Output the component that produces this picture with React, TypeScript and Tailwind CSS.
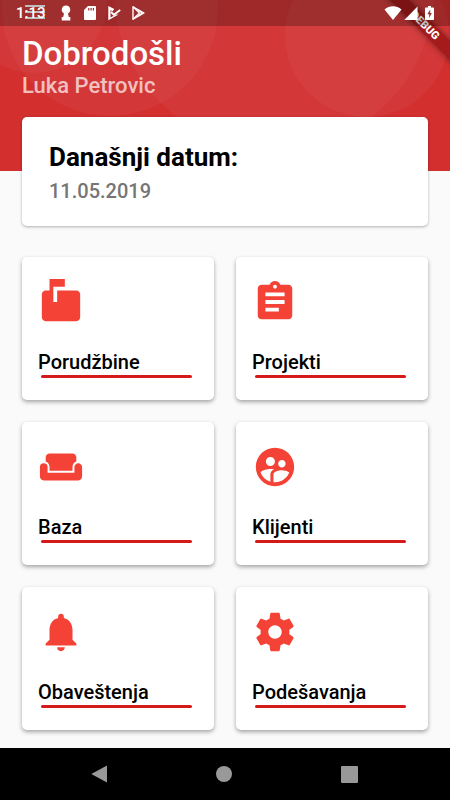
import React from 'react';
import type { IconType } from 'react-icons';
import {
  MdAssignment,
  MdMarkunreadMailbox,
  MdNotifications,
  MdSupervisedUserCircle,
  MdWeekend,
} from 'react-icons/md';

type CardIcon = IconType | ((props: { className?: string }) => React.ReactElement);

function CogIcon({ className }: { className?: string }) {
  return (
    <svg className={className} viewBox="0 0 24 24" fill="currentColor">
      <path d="M19.43 12.98c.04-.32.07-.64.07-.98s-.03-.66-.07-.98l2.11-1.65c.19-.15.24-.42.12-.64l-2-3.460c-.12-.22-.39-.3-.61-.22l-2.490 1c-.52-.4-1.080-.73-1.690-.98l-.38-2.650C14.460 2.180 14.250 2 14 2h-4c-.25 0-.46.18-.49.42l-.38 2.650c-.61.25-1.170.59-1.690.98l-2.490-1c-.23-.09-.49 0-.61.22l-2 3.460c-.13.22-.07.49.12.64l2.110 1.650c-.04.32-.07.65-.07.98s.03.66.07.98l-2.110 1.650c-.19.15-.24.42-.12.64l2 3.460c.12.22.39.3.61.22l2.490-1c.52.4 1.080.73 1.690.98l.38 2.650c.03.24.24.42.49.42h4c.25 0 .46-.18.49-.42l.38-2.650c.61-.25 1.170-.59 1.690-.98l2.490 1c.23.09.49 0 .61-.22l2-3.460c.12-.22.07-.49-.12-.64l-2.110-1.650zM12 15.500c-1.930 0-3.500-1.570-3.500-3.500s1.570-3.500 3.500-3.500 3.500 1.570 3.500 3.500-1.570 3.500-3.500 3.500z" />
    </svg>
  );
}

const items: { label: string; icon: CardIcon }[] = [
  { label: 'Porudžbine', icon: MdMarkunreadMailbox },
  { label: 'Projekti', icon: MdAssignment },
  { label: 'Baza', icon: MdWeekend },
  { label: 'Klijenti', icon: MdSupervisedUserCircle },
  { label: 'Obaveštenja', icon: MdNotifications },
  { label: 'Podešavanja', icon: CogIcon },
];

function StatusBar() {
  return (
    <div className="absolute inset-x-0 top-0 z-20 flex h-[26px] items-center justify-between bg-black/25 px-4 text-white">
      <div className="flex items-center">
        <span className="w-[45px] text-[15px] leading-5 font-medium">1:13</span>
        <svg className="h-4 w-[10px]" viewBox="0 0 10 16" fill="currentColor">
          <path d="M5 0.500a4.200 4.200 0 0 1 2 7.900L7.800 12H9.300v3.500H.7V12h1.500L3 8.400A4.200 4.200 0 0 1 5 .5z" />
        </svg>
        <svg className="ml-[13px] h-4 w-3" viewBox="0 0 12 16" fill="currentColor">
          <path fillRule="evenodd" d="M4 1h7a1 1 0 0 1 1 1v12a1 1 0 0 1-1 1H1a1 1 0 0 1-1-1V5zM4.200 3v2.600h1.200V3zM6.500 3v2.600h1.200V3zM8.800 3v2.600H10V3z" />
        </svg>
        <svg className="ml-3 h-4 w-[13px]" viewBox="0 0 13 16">
          <path fill="currentColor" d="M0.300 1l6 3-1.800 2.500L2.500 5v7.500L8 9.500h2.500L.3 15.200z" />
          <path fill="none" stroke="currentColor" strokeWidth="2" d="M3 7L5.800 9.700 12.200 5" />
        </svg>
        <svg className="ml-[11px] h-4 w-[13px]" viewBox="0 0 13 16" fill="none" stroke="currentColor" strokeLinejoin="round">
          <path strokeWidth="1.400" d="M1 1.800v12.400L12 8z" />
          <path strokeWidth="1.400" d="M1 1.800L7.500 8 1 14.200M6.500 5l3.500 3-3.500 3" />
        </svg>
      </div>
      <div className="flex items-center">
        <svg className="h-4 w-[18px]" viewBox="0 0 18 16" fill="currentColor">
          <path d="M9 15L.5 4.400C3 2.300 6 1.200 9 1.200s6 1.100 8.500 3.200z" />
        </svg>
        <svg className="ml-[2px] h-4 w-[14px]" viewBox="0 0 14 16" fill="currentColor">
          <path d="M0.300 15H13.500V1.500z" />
        </svg>
        <svg className="ml-[7px] h-4 w-[9px]" viewBox="0 0 9 16" fill="currentColor">
          <path fillRule="evenodd" d="M3 1h3v1.500h2.200a.8.8 0 0 1 .8.800v11a.8.8 0 0 1-.8.800H.8a.8.8 0 0 1-.8-.8v-11a.8.8 0 0 1 .8-.8H3zM5.200 4.500L2.400 9.300h1.800v3.700l2.600-5H5.200z" />
        </svg>
      </div>
    </div>
  );
}

function DebugBanner() {
  return (
    <div className="pointer-events-none absolute right-0 top-0 z-10 h-20 w-20 overflow-hidden">
      <div className="absolute -right-[35px] top-[19px] w-[120px] rotate-45 bg-[#a51a1a] text-center text-[11px] leading-[13px] font-black text-white shadow-[0_0_6px_rgba(0,0,0,0.5)]">
        DEBUG
      </div>
    </div>
  );
}

function HeaderBackground() {
  return (
    <div className="absolute inset-x-0 top-0 h-[171px] overflow-hidden bg-[#d32f2f]">
      <svg className="h-full w-full" viewBox="0 0 450 171" preserveAspectRatio="xMidYMin slice" fill="#fff" fillOpacity="0.04">
        <circle cx="34" cy="0" r="73" />
        <circle cx="110" cy="8" r="108" />
        <circle cx="274" cy="-10" r="160" />
        <circle cx="367" cy="35" r="82" />
      </svg>
    </div>
  );
}

function MenuCard({ label, icon: Icon }: { label: string; icon: CardIcon }) {
  return (
    <button
      type="button"
      className="flex flex-col rounded-[5px] bg-white pt-[22px] pr-[22px] pb-[22px] pl-4 text-left shadow-[0_2px_4px_rgba(0,0,0,0.35)]"
    >
      <Icon className="h-[46px] w-[46px] text-[#f44336]" />
      <span className="mt-[25px] text-[20px] leading-6 font-medium text-black">{label}</span>
      <span className="mt-px ml-[3px] h-[3px] self-stretch rounded-full bg-[#d51a1a]" />
    </button>
  );
}

function NavigationBar() {
  return (
    <nav className="mt-auto grid h-[52px] grid-cols-3 items-center bg-black pr-[38px] pl-9 text-[#999]">
      <button type="button" aria-label="Back" className="flex justify-center">
        <svg className="h-[18px] w-4" viewBox="0 0 16 18" fill="currentColor"><path d="M16 0.500v17L0.300 9z" /></svg>
      </button>
      <button type="button" aria-label="Home" className="flex justify-center">
        <svg className="h-4 w-4" viewBox="0 0 16 16" fill="currentColor"><circle cx="8" cy="8" r="8" /></svg>
      </button>
      <button type="button" aria-label="Overview" className="flex justify-center">
        <svg className="h-[17px] w-[17px]" viewBox="0 0 17 17" fill="currentColor"><rect width="17" height="17" rx="1" /></svg>
      </button>
    </nav>
  );
}

export default function App() {
  return (
    <div className="relative flex min-h-screen flex-col bg-[#fafafa] font-[Roboto,sans-serif]">
      <HeaderBackground />
      <StatusBar />
      <DebugBanner />

      <main className="relative px-[22px] pb-[18px]">
        <header className="text-white">
          <button type="button" aria-label="Menu" className="block pt-[5px] pl-[3px]">
            <svg className="h-[15px] w-5" viewBox="0 0 20 15" fill="currentColor">
              <path d="M0 0h20v2H0zM0 6h20v2H0zM0 12h20v2H0z" />
            </svg>
          </button>
          <h1 className="mt-4 text-[33px] leading-9 font-medium">Dobrodošli</h1>
          <p className="text-[22px] leading-7 font-medium text-white/70">Luka Petrovic</p>
        </header>

        {/* Today's date */}
        <section className="mt-[17px] rounded-[5px] bg-white px-[27px] pt-6 pb-[23px] shadow-[0_1px_3px_rgba(0,0,0,0.3)]">
          <h2 className="text-[26px] leading-8 font-bold text-black">Današnji datum:</h2>
          <p className="mt-[6px] text-[20px] leading-6 font-medium text-[#757575]">11.05.2019</p>
        </section>

        <div className="mt-[31px] grid grid-cols-2 gap-[22px]">
          {items.map((item) => (
            <MenuCard key={item.label} label={item.label} icon={item.icon} />
          ))}
        </div>
      </main>

      <NavigationBar />
    </div>
  );
}
